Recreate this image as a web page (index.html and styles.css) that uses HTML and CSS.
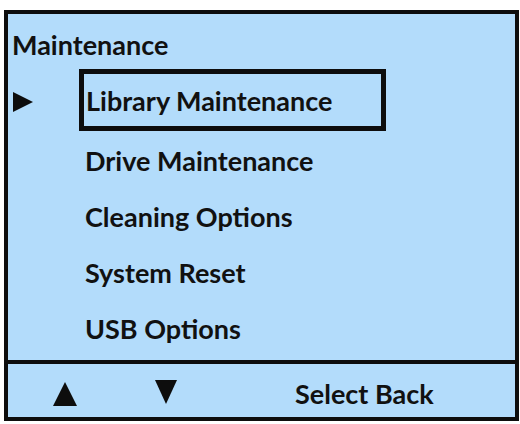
FILE: index.html
```html
<!DOCTYPE html>
<html>
<head>
<meta charset="utf-8">
<link rel="stylesheet" href="styles.css">
</head>
<body>
<div class="panel">
  <div class="content">
    <div class="title">Maintenance</div>
    <div class="menu">
      <div class="row selected-row">
        <svg class="pointer" width="20" height="20" viewBox="0 0 20 20"><polygon points="0,0 20,10 0,20" fill="#0d0d0d"/></svg>
        <div class="label selected">Library Maintenance</div>
      </div>
      <div class="row"><div class="label">Drive Maintenance</div></div>
      <div class="row"><div class="label">Cleaning Options</div></div>
      <div class="row"><div class="label">System Reset</div></div>
      <div class="row"><div class="label">USB Options</div></div>
    </div>
  </div>
  <div class="footer">
    <svg class="up" width="24" height="24" viewBox="0 0 24 24"><polygon points="12,0 24,24 0,24" fill="#0d0d0d"/></svg>
    <svg class="down" width="22" height="24" viewBox="0 0 22 24"><polygon points="0,0 22,0 11,24" fill="#0d0d0d"/></svg>
    <div class="keys">Select Back</div>
  </div>
</div>
</body>
</html>
```
FILE: styles.css
```css
html, body {
  margin: 0;
  padding: 0;
  background: #ffffff;
}
body {
  width: 520px;
  height: 424px;
  overflow: hidden;
  font-family: Lato, "Open Sans", sans-serif;
  font-weight: 700;
  color: #111111;
}
.panel {
  margin: 10px 1px 0 4px;
  width: 515px;
  height: 411px;
  box-sizing: border-box;
  border: 4px solid #0d0d0d;
  background: #b3dcfb;
  display: flex;
  flex-direction: column;
}
.content {
  height: 346px;
  padding-left: 4px;
  box-sizing: border-box;
}
.title {
  font-size: 27px;
  line-height: 30px;
  margin-top: 16px;
}
.menu {
  margin-top: 9px;
  display: flex;
  flex-direction: column;
}
.row {
  display: flex;
  align-items: center;
  padding-left: 73px;
  height: 56px;
  font-size: 27px;
  line-height: 30px;
}
.selected-row {
  height: 62px;
  padding-left: 0;
  margin-bottom: 2px;
}
.pointer {
  margin-left: 1px;
  margin-right: 46px;
  margin-top: 4px;
}
.selected {
  width: 307px;
  height: 62px;
  box-sizing: border-box;
  border: 5px solid #0d0d0d;
  padding: 12px 0 0 2px;
}
.footer {
  flex: 1;
  border-top: 4px solid #0d0d0d;
  display: flex;
  align-items: center;
  padding-left: 45px;
  font-size: 27px;
  line-height: 30px;
}
.up {
  margin-top: 6px;
}
.down {
  margin-left: 78px;
  margin-top: 3px;
}
.keys {
  margin-left: 118px;
  margin-top: 7px;
}
```
